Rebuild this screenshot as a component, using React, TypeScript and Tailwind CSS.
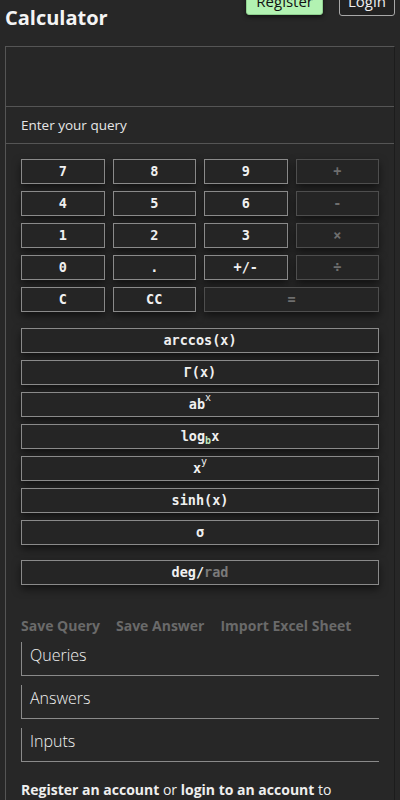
import React from "react";

const sans = { fontFamily: '"Open Sans", "Noto Sans", sans-serif' };
const mono = { fontFamily: '"DejaVu Sans Mono", "Liberation Mono", monospace' };

function Btn({ children, op = false, className = "" }: { children: React.ReactNode; op?: boolean; className?: string }) {
  return (
    <button
      style={mono}
      className={
        "w-full h-[25px] bg-[#252525] text-[13.5px] font-bold border flex items-center justify-center shadow-[0_4px_8px_rgba(0,0,0,0.55)] " +
        (op ? "border-[#4e4e4e] text-[#6e6e6e] " : "border-[#8a8a8a] text-[#f0f0f0] ") +
        className
      }
    >
      {children}
    </button>
  );
}

export default function App() {
  const rows: [string, string, string, string][] = [
    ["7", "8", "9", "+"],
    ["4", "5", "6", "-"],
    ["1", "2", "3", "×"],
    ["0", ".", "+/-", "÷"],
  ];
  return (
    <div style={sans} className="w-[400px] h-[800px] overflow-hidden bg-[#272727] text-white">
      <div className="flex items-start justify-between h-[46px]">
        <h1 className="text-[20px] font-bold leading-none pl-[5px] pt-[8px] text-[#f4f4f4]">Calculator</h1>
        <div className="flex gap-[16px] -mt-[10px] pr-[5px]">
          <button className="h-[25px] px-[9px] rounded-[3px] bg-[#b2f2b2] border border-[#8fd08f] text-[#111] text-[15px] leading-none pb-[3px] shadow-[0_2px_4px_rgba(0,0,0,0.5)]">
            Register
          </button>
          <button className="h-[26px] px-[8px] rounded-[3px] bg-[#222] border border-[#a8a8a8] text-[#eee] text-[15px] leading-none pb-[3px]">
            Login
          </button>
        </div>
      </div>
      <div className="ml-[5px] w-[390px] h-[760px] border border-[#555] border-r-[#1c1c1c]">
        <div className="h-[60px] border-b border-[#555]"></div>
        <div className="h-[37px] border-b border-[#555] px-[15px] flex items-center text-[13.5px] text-[#e6e6e6]">
          Enter your query
        </div>
        <div className="px-[15px] pt-[15px]">
          <div className="grid grid-cols-4 gap-x-2 gap-y-[7px]">
            {rows.map((r) =>
              r.map((k, i) => (
                <Btn key={k} op={i === 3}>
                  {k}
                </Btn>
              ))
            )}
            <Btn>C</Btn>
            <Btn>CC</Btn>
            <Btn op className="col-span-2">=</Btn>
          </div>
          <div className="mt-[16px] flex flex-col gap-[7px]">
            <Btn>arccos(x)</Btn>
            <Btn>Γ(x)</Btn>
            <Btn>
              ab<sup className="text-[10px] font-normal -mt-[4px]">x</sup>
            </Btn>
            <Btn>
              log<sub className="text-[10px] text-[#bfe6bf] mt-[4px]">b</sub>x
            </Btn>
            <Btn>
              x<sup className="text-[10px] font-normal -mt-[4px]">y</sup>
            </Btn>
            <Btn>sinh(x)</Btn>
            <Btn>σ</Btn>
          </div>
          <div className="mt-[15px]">
            <Btn>
              deg/<span className="text-[#7a7a7a]">rad</span>
            </Btn>
          </div>
          <div className="mt-[31px] flex gap-[16px] text-[14px] font-bold text-[#6a6a6a] leading-[20px]">
            <span>Save Query</span>
            <span>Save Answer</span>
            <span>Import Excel Sheet</span>
          </div>
          <div className="mt-[6px] flex flex-col gap-[9px]">
            {["Queries", "Answers", "Inputs"].map((s) => (
              <div key={s} className="h-[34px] border-l border-b border-[#8a8a8a] pl-[8px] text-[16px] text-[#f2f2f2] font-light leading-[26px]">
                {s}
              </div>
            ))}
          </div>
          <p className="mt-[17px] text-[14px] text-[#eee] leading-[22px]">
            <b>Register an account</b> or <b>login to an account</b> to
          </p>
        </div>
      </div>
    </div>
  );
}
